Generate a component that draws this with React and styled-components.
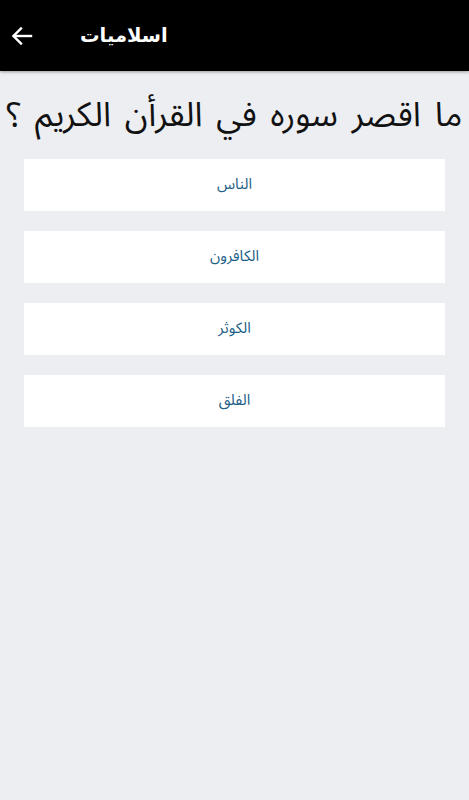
import React from "react";
import styled, { createGlobalStyle } from "styled-components";

const Global = createGlobalStyle`
  html, body { margin: 0; padding: 0; background: #edeef2; }
  body { font-family: "Noto Sans Arabic", "DejaVu Sans", "Noto Sans", sans-serif; }
`;

const Page = styled.div`
  width: 469px;
  min-height: 800px;
  background: #edeef2;
  display: flex;
  flex-direction: column;
`;

const Header = styled.header`
  height: 71px;
  background: #000;
  display: flex;
  align-items: center;
  padding: 0 0 0 8px;
  gap: 44px;
  box-shadow: 0 1px 3px rgba(0,0,0,0.35);
  position: relative;
  z-index: 1;
`;

const BackButton = styled.button`
  background: none;
  border: none;
  padding: 0;
  width: 28px;
  height: 28px;
  display: flex;
  align-items: center;
  justify-content: center;
  color: #fff;
`;

const Title = styled.h1`
  margin: 0;
  color: #fff;
  font-size: 19.5px;
  font-weight: bold;
  font-family: "DejaVu Sans", sans-serif;
  direction: rtl;
`;

const Question = styled.h2`
  margin: 15px 0 0;
  text-align: center;
  direction: rtl;
  font-weight: normal;
  font-size: 34px;
  line-height: 58px;
  word-spacing: 5px;
  color: #111;
  white-space: nowrap;
`;

const Answers = styled.div`
  display: flex;
  flex-direction: column;
  gap: 20px;
  padding: 15px 24px 0 24px;
`;

const Answer = styled.div`
  height: 52px;
  background: #fff;
  display: flex;
  align-items: center;
  justify-content: center;
  direction: rtl;
  color: #1b5e86;
  font-size: 15px;
  padding-bottom: 2px;
  box-sizing: border-box;
`;

const answers = ["الناس", "الكافرون", "الكوثر", "الفلق"];

export default function App() {
  return (
    <Page>
      <Global />
      <Header>
        <BackButton aria-label="back">
          <svg width="24" height="24" viewBox="0 0 24 24" fill="none" stroke="#fff" strokeWidth="2.4" strokeLinecap="square">
            <path d="M21 12H4" />
            <path d="M11 4.5L3.5 12L11 19.5" />
          </svg>
        </BackButton>
        <Title>اسلاميات</Title>
      </Header>
      <Question>ما اقصر سوره في القرأن الكريم ؟</Question>
      <Answers>
        {answers.map((a) => (
          <Answer key={a}>{a}</Answer>
        ))}
      </Answers>
    </Page>
  );
}
